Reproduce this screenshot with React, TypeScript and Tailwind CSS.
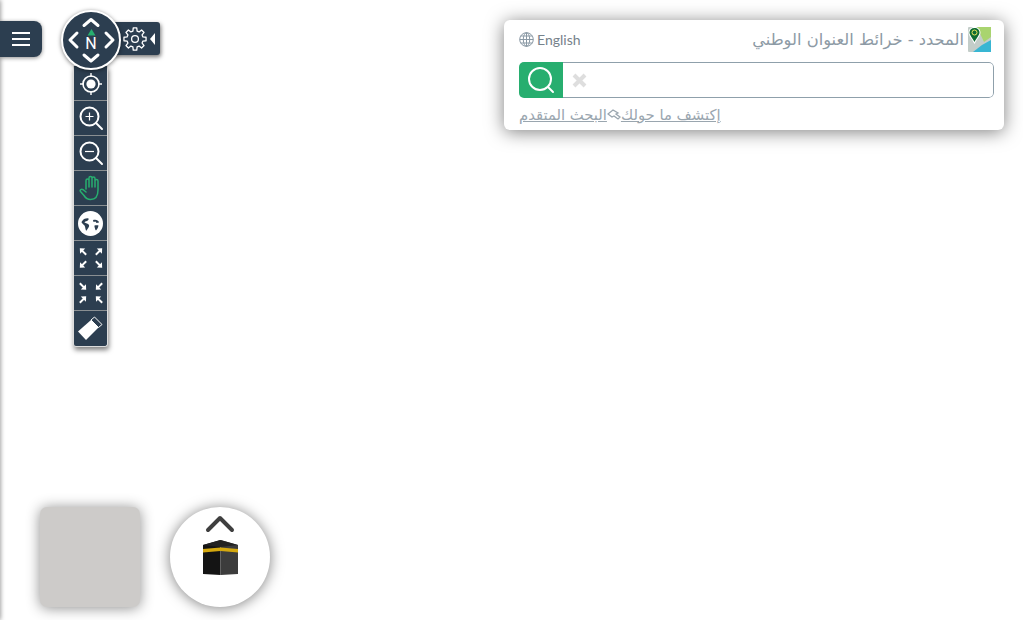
const arabicFont = "font-['DejaVu_Sans','Noto_Sans',sans-serif]";

// 8 tooth gear outline, centred on 12,12
const gearPath = Array.from({ length: 8 }, (_, i) => {
  const pt = (deg: number, r: number) => {
    const a = ((i * 45 + deg) * Math.PI) / 180;
    return `${(12 + r * Math.sin(a)).toFixed(2)} ${(12 - r * Math.cos(a)).toFixed(2)}`;
  };
  return `${i === 0 ? 'M' : 'L'}${pt(-15, 8.2)}L${pt(-9, 11.2)}L${pt(9, 11.2)}L${pt(15, 8.2)}`;
}).join('') + 'Z';

function LocateIcon() {
  return (
    <svg width="24" height="24" viewBox="0 0 24 24" fill="none" stroke="white">
      <circle cx="12" cy="12" r="8" strokeWidth="1.6" />
      <circle cx="12" cy="12" r="4.6" fill="white" stroke="none" />
      <path d="M12 1v4M12 19v4M1 12h4M19 12h4" strokeWidth="1.4" />
    </svg>
  );
}

function ZoomIcon({ plus }: { plus?: boolean }) {
  return (
    <svg width="26" height="26" viewBox="0 0 26 26" fill="none" stroke="white">
      <circle cx="11.5" cy="11.5" r="9" strokeWidth="2" />
      <path d="M18 18l6 6" strokeWidth="2" strokeLinecap="round" />
      <path d={plus ? 'M7.500 11.500h8M11.500 7.500v8' : 'M7 11.500h9'} strokeWidth="1.200" />
    </svg>
  );
}

function HandIcon() {
  return (
    <svg width="24" height="26" viewBox="0 0 24 26" fill="none" stroke="#27ae6f" strokeWidth="1.500" strokeLinecap="round" strokeLinejoin="round">
      <path d="M7 14V5.500a1.500 1.500 0 0 1 3 0V12M10 12V3a1.500 1.500 0 0 1 3 0v9M13 12V3.500a1.500 1.500 0 0 1 3 0V12M16 12V6a1.500 1.500 0 0 1 3 0v9c0 6-2.500 9.500-7.500 9.500-3 0-5-1.500-6.500-4l-3.500-4c-1-1.500 1-3 2.500-1.800L7 17" />
    </svg>
  );
}

function EarthIcon() {
  return (
    <svg width="25" height="25" viewBox="0 0 25 25">
      <circle cx="12.500" cy="12.500" r="12.500" fill="white" />
      <path
        d="M6 8c1.500 0 3-1 4.500-.5.5 1-.5 2-1.500 2.500-1 .5-2.500.5-2.500 1.500 1.500 1 3.500.5 4.500 2.500.5 1.500-.5 2.500-1.500 4-.5 1-1 2-1.500 1.500-1-2-.5-3.500-1.500-5C5 13 3.500 12 3.500 11 4 10 5 9 6 8zM15 9c2-.5 3.500-.5 4.500.5 1 .5 1.500 1.500 1.500 2l-2.500.5-1-1.500-2 .5zM16.500 14.500c1.500-.5 3-.5 4 0-.5 2-1 3.500-2.500 5-1-1-1-2.500-1.500-3.500z"
        fill="#2c3e50"
      />
    </svg>
  );
}

function ExpandIcon({ inward }: { inward?: boolean }) {
  const rotations = inward ? [135, 225, 45, 315] : [315, 45, 225, 135];
  return (
    <svg width="24" height="24" viewBox="0 0 24 24" fill="none" stroke="white">
      {[
        [4, 5.500],
        [20, 5.500],
        [4, 18.500],
        [20, 18.500],
      ].map(([x, y], i) => (
        <g key={i} transform={`translate(${x} ${y}) rotate(${rotations[i]})`}>
          <path d="M0 4.500V-2" strokeWidth="2" />
          <path d="M-3.600 -.5H3.600L0 -4.500Z" fill="white" stroke="none" />
        </g>
      ))}
    </svg>
  );
}

function EraserIcon() {
  return (
    <svg width="27" height="25" viewBox="0 0 27 25">
      <path d="M1 15.500 14 4l7.500 7.500L9 24Z" fill="white" />
      <path d="M14 4l3.500-3 7.500 7.500-3.500 3Z" fill="none" stroke="white" strokeWidth="1" />
    </svg>
  );
}

function CompassControl() {
  return (
    <div className="absolute top-[10px] left-[61px] flex h-[60px] w-[60px] items-center justify-center rounded-full border-2 border-white bg-[#2c3e50] shadow-[0_1px_4px_rgba(0,0,0,0.5)]">
      <svg width="56" height="56" viewBox="0 0 56 56" fill="none" stroke="white" strokeWidth="3" strokeLinecap="round" strokeLinejoin="round">
        <path d="M21 13.500l7-6 7 6M21 43l7 6 7-6M14 21l-7 7 7 7M43 21l7 7-7 7" />
        <path d="M24.500 23.500l4-6.500 4 6.500z" fill="#27ae6f" stroke="none" />
      </svg>
      <span className="absolute top-[24px] font-['Roboto',sans-serif] text-[16px] leading-none font-normal text-white">N</span>
    </div>
  );
}

const cellClass = 'flex h-[35px] items-center justify-center border-b border-[#8a8f92] last:border-b-0';

export default function App() {
  return (
    <div className="relative h-[620px] w-[1023px] overflow-hidden bg-white">
      <div className="absolute top-0 left-[-4px] h-full w-[4px] shadow-[0_0_5px_rgba(0,0,0,0.55)]" />

      <button className="absolute top-[21px] left-0 flex h-[36px] w-[42px] items-center justify-center rounded-r-[8px] bg-[#2c3e50] shadow-[0_1px_4px_rgba(0,0,0,0.45)]">
        <span className="flex w-[18px] flex-col gap-[4px]">
          <span className="h-[2px] bg-white" />
          <span className="h-[2px] bg-white" />
          <span className="h-[2px] bg-white" />
        </span>
      </button>

      <div className="absolute top-[22px] left-[110px] flex h-[33px] w-[50px] items-center justify-end gap-[3px] rounded-[3px] bg-[#2c3e50] pr-[5px] shadow-[1px_2px_4px_rgba(0,0,0,0.55)]">
        <svg width="24" height="24" viewBox="0 0 24 24" fill="none" stroke="white" strokeWidth="1.300" strokeLinejoin="round">
          <path d={gearPath} />
          <circle cx="12" cy="12" r="3.400" />
        </svg>
        <span className="h-0 w-0 border-y-[6px] border-r-[5px] border-y-transparent border-r-white" />
      </div>

      <div className="absolute top-[66px] left-[73px] w-[35px] rounded-b-[3px] border-x border-b border-[#dcdcdc] bg-[#2c3e50] shadow-[1px_3px_5px_rgba(0,0,0,0.5)]">
        <div className={`${cellClass} pt-[2px]`}><LocateIcon /></div>
        <div className={cellClass}><ZoomIcon plus /></div>
        <div className={cellClass}><ZoomIcon /></div>
        <div className={cellClass}><HandIcon /></div>
        <div className={cellClass}><EarthIcon /></div>
        <div className={cellClass}><ExpandIcon /></div>
        <div className={cellClass}><ExpandIcon inward /></div>
        <div className={cellClass}><EraserIcon /></div>
      </div>

      <CompassControl />

      <div className="absolute top-[20px] left-[504px] flex h-[110px] w-[500px] flex-col rounded-[6px] bg-white pt-[7px] pr-[10px] pl-[15px] shadow-[0_2px_18px_rgba(0,0,0,0.5)]">
        <div className="flex h-[25px] items-center justify-between">
          <div className="flex items-center gap-[3px] font-['Lato',sans-serif] text-[14px] text-[#76828b]">
            <svg width="15" height="15" viewBox="0 0 15 15" fill="none" stroke="#8a99a5" strokeWidth="1">
              <circle cx="7.500" cy="7.500" r="6.800" />
              <ellipse cx="7.500" cy="7.500" rx="3.200" ry="6.800" />
              <path d="M.7 7.500h13.600M1.700 4h11.600M1.700 11h11.600M7.500 .7v13.600" />
            </svg>
            <span>English</span>
          </div>
          <div className="mr-[3px] flex items-center gap-[4px]">
            <span dir="rtl" className={`${arabicFont} mt-[2px] text-[16.300px] leading-none text-[#8d9aa5]`}>
              المحدد - خرائط العنوان الوطني
            </span>
            <svg width="23" height="25" viewBox="0 0 23 25">
              <rect width="23" height="25" rx="1" fill="#c3cdc9" />
              <path d="M9 0h14v10l-7 5z" fill="#a9d46f" />
              <path d="M23 13v12H5l9-7z" fill="#38b6d3" />
              <path d="M6.500 0c3.500 0 6 2.500 6 5.500 0 3-3.500 6.500-6 11.500C4 12 .5 8.500.5 5.500.5 2.500 3 0 6.500 0z" fill="white" />
              <path d="M6.500 1c3 0 5 2 5 4.500S8.500 11 6.500 15C4.500 11 1.500 8 1.500 5.500S3.500 1 6.500 1z" fill="#0f6b33" />
              <circle cx="6.500" cy="5.500" r="2.500" fill="none" stroke="#e8e35a" strokeWidth="1" />
            </svg>
          </div>
        </div>

        <div className="mt-[10px] flex h-[36px] overflow-hidden rounded-[5px]">
          <div className="flex w-[44px] items-center justify-center bg-[#27ae6f]">
            <svg width="30" height="30" viewBox="0 0 30 30" fill="none" stroke="white" strokeWidth="2">
              <circle cx="14" cy="14" r="11" />
              <path d="M22 22l5 5" strokeLinecap="round" />
            </svg>
          </div>
          <div className="flex flex-1 items-center rounded-r-[5px] border border-l-0 border-[#8fa0ab] pl-[9px]">
            <svg width="15" height="15" viewBox="0 0 15 15" stroke="#dedede" strokeWidth="4">
              <path d="M2 2l11 11M13 2 2 13" />
            </svg>
          </div>
        </div>

        <div className="mt-[10px] flex">
          <div dir="rtl" className={`${arabicFont} flex items-center text-[14.800px] leading-none text-[#9aa6af]`}>
            <span className="underline">إكتشف ما حولك</span>
            <svg width="14" height="12" viewBox="0 0 14 12" fill="none" stroke="#9aa6af" strokeWidth="1.300">
              <path d="M1 5l5-4 5 3-2 1 4 3-2 2-4-3-2 1z" />
            </svg>
            <span className="underline">البحث المتقدم</span>
          </div>
        </div>
      </div>

      <div className="absolute top-[507px] left-[40px] h-[100px] w-[100px] rounded-[7px] bg-[#cdcbc9] shadow-[0_1px_14px_rgba(0,0,0,0.45)]" />

      <div className="absolute top-[507px] left-[170px] flex h-[100px] w-[100px] flex-col items-center rounded-full bg-white pt-[8px] shadow-[0_1px_14px_rgba(0,0,0,0.5)]">
        <svg width="30" height="18" viewBox="0 0 30 18" fill="none" stroke="#3f3f3f" strokeWidth="4" strokeLinecap="round" strokeLinejoin="round">
          <path d="M3 15 15 3l12 12" />
        </svg>
        <svg className="mt-[7px]" width="35" height="35" viewBox="0 0 35 35">
          <path d="M0 5 17.500 0v35L0 34z" fill="#141414" />
          <path d="M35 5 17.500 0v35l17.500-1z" fill="#3c3c3c" />
          <path d="M0 5 17.500 0 35 5l-17.500 2z" fill="#222" />
          <path d="M0 9l17.500-1.500L35 9v3.500l-17.500-1.500L0 12.500z" fill="#d4a80f" />
        </svg>
      </div>
    </div>
  );
}
